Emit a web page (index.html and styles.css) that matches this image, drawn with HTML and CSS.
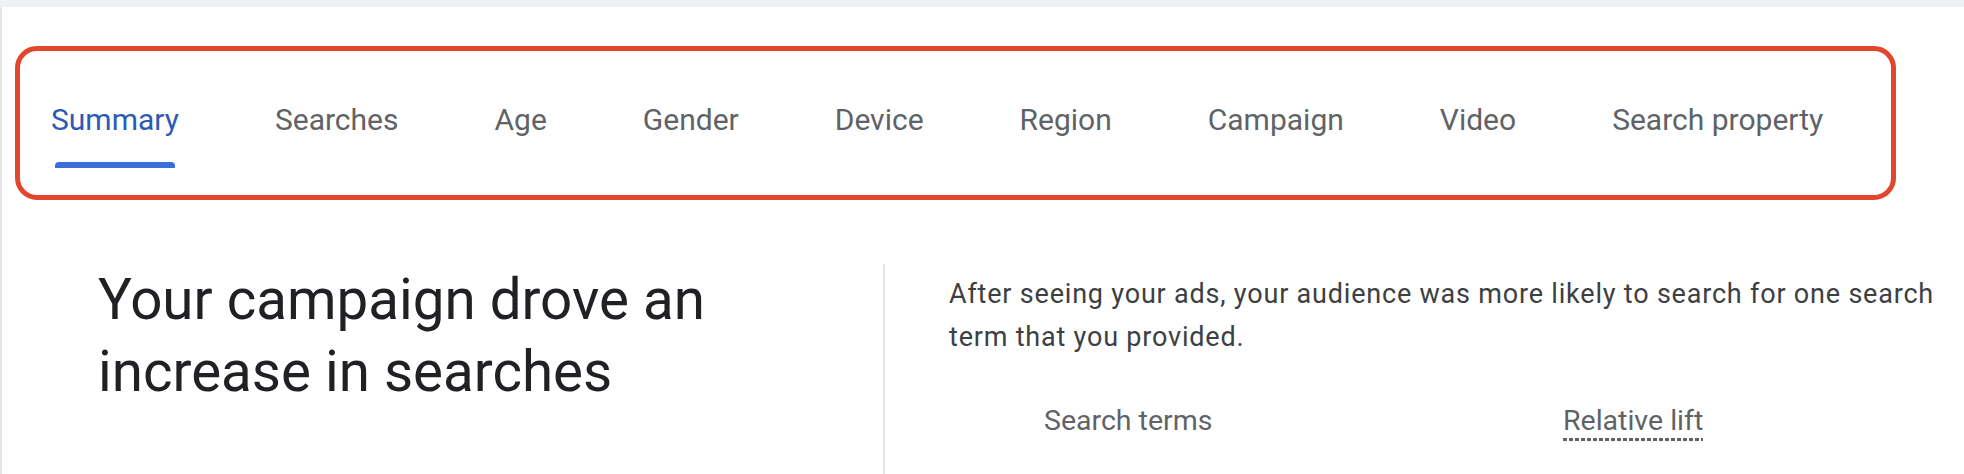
FILE: index.html
```html
<!DOCTYPE html>
<html lang="en">
<head>
<meta charset="utf-8">
<title>Search lift summary</title>
<link rel="stylesheet" href="styles.css">
</head>
<body>
<div class="page">
  <nav class="tabs-frame">
    <ul class="tabs">
      <li class="tab active"><span class="tab-label">Summary</span><span class="tab-bar"></span></li>
      <li class="tab"><span class="tab-label">Searches</span><span class="tab-bar"></span></li>
      <li class="tab"><span class="tab-label">Age</span><span class="tab-bar"></span></li>
      <li class="tab"><span class="tab-label">Gender</span><span class="tab-bar"></span></li>
      <li class="tab"><span class="tab-label">Device</span><span class="tab-bar"></span></li>
      <li class="tab"><span class="tab-label">Region</span><span class="tab-bar"></span></li>
      <li class="tab"><span class="tab-label">Campaign</span><span class="tab-bar"></span></li>
      <li class="tab"><span class="tab-label">Video</span><span class="tab-bar"></span></li>
      <li class="tab"><span class="tab-label">Search property</span><span class="tab-bar"></span></li>
    </ul>
  </nav>
  <section class="summary">
    <div class="summary-head">
      <h1 class="headline">Your campaign drove an increase in searches</h1>
    </div>
    <div class="summary-body">
      <p class="lead">After seeing your ads, your audience was more likely to search for one search term that you provided.</p>
      <div class="table-head">
        <span class="col-terms">Search terms</span>
        <span class="col-lift"><span class="lift">Relative lift</span></span>
      </div>
    </div>
  </section>
</div>
</body>
</html>
```
FILE: styles.css
```css
* { box-sizing: border-box; }
html, body { margin: 0; padding: 0; }
body {
  background: #eff1f2;
  font-family: Roboto, "Liberation Sans", Arial, sans-serif;
  overflow: hidden;
  height: 474px;
}
.page {
  margin-top: 7px;
  background: #ffffff;
  border-left: 2px solid #e4e5e7;
  min-height: 467px;
  padding-top: 39px;
}
.tabs-frame {
  margin-left: 13px;
  width: 1881px;
  height: 154px;
  border: 5px solid #e2472d;
  border-radius: 22px;
}
.tabs {
  list-style: none;
  margin: 0;
  padding: 52px 0 0 31px;
  display: flex;
  gap: 96px;
  align-items: flex-start;
}
.tab {
  display: flex;
  flex-direction: column;
  font-size: 30px;
  line-height: 34px;
  color: #5f6368;
  white-space: nowrap;
}
.tab.active { color: #2c5ab6; }
.tab-bar {
  display: block;
  height: 6px;
  margin: 25px 4px 0;
  border-radius: 4px 4px 0 0;
  background: transparent;
}
.tab.active .tab-bar { background: #3a6fd9; }

.summary {
  display: flex;
  margin-top: 64px;
}
.summary-head {
  width: 881px;
  padding-left: 96px;
  flex: none;
}
.headline {
  margin: 0;
  font-weight: 400;
  font-size: 56.5px;
  line-height: 72px;
  color: #202124;
  width: 720px;
}
.summary-body {
  flex: 1;
  border-left: 2px solid #e2e3e5;
  min-height: 220px;
  padding: 9px 0 0 64px;
}
.lead {
  margin: 0;
  font-size: 27px;
  letter-spacing: 0.8px;
  line-height: 43px;
  color: #3c4043;
  width: 1010px;
}
.table-head {
  display: flex;
  margin-top: 46px;
  padding-left: 95px;
  font-size: 28.5px;
  line-height: 32px;
  color: #5f6368;
}
.col-terms { width: 519px; flex: none; }
.lift {
  display: inline-block;
  padding-bottom: 4px;
  background-image: repeating-linear-gradient(90deg, #5f6368 0 4px, transparent 4px 6px);
  background-size: 100% 3px;
  background-repeat: no-repeat;
  background-position: left bottom;
}
```
